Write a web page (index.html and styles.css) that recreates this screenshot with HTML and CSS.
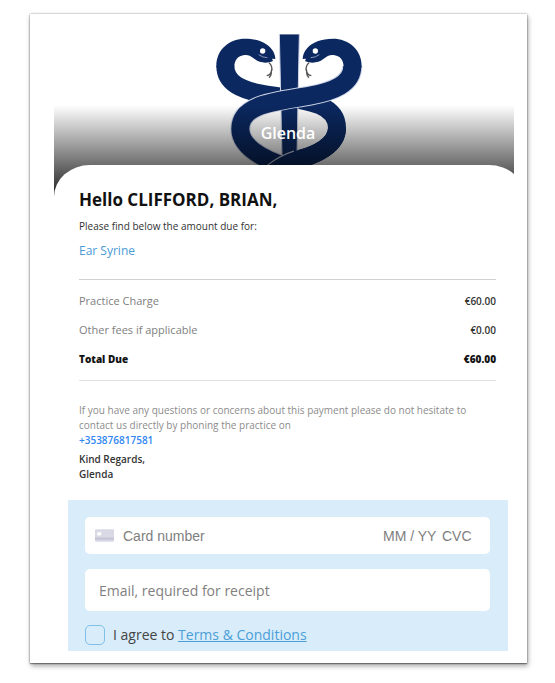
FILE: index.html
```html
<!DOCTYPE html>
<html lang="en">
<head>
<meta charset="utf-8">
<title>Payment request</title>
<link rel="stylesheet" href="styles.css">
</head>
<body>
<main class="card">
  <header class="hero">
    <svg class="logo" viewBox="45 40 444 396" aria-hidden="true">
      <g fill="none" stroke-linecap="butt">
        <path class="snake" d="M76 136C76 190 130 208 180 218C280 238 411 235 411 322C411 375 345 403 300 415"/>
        <path class="staff" d="M238 40H298L291 400L246 410Z"/>
        <path class="edge" d="M457 136C457 190 400 212 330 225C230 243 121 248 121 325C121 370 170 405 240 432"/>
        <path class="snake" d="M457 136C457 190 400 212 330 225C230 243 121 248 121 325C121 370 170 405 240 432"/>
        <path class="edge" d="M290 418C262 427 238 440 215 460"/>
        <path class="snake" d="M411 322C411 375 345 403 300 415C265 426 238 440 215 460"/>
      </g>
      <g id="head">
        <path class="skin" d="M49 140C47 85 90 54 135 54C170 54 198 65 212 82C221 92 226 104 226 115L216 114L219 121C200 130 178 126 165 116C153 106 145 102 134 103C113 105 103 119 103 140Z"/>
        <circle cx="188" cy="91" r="8" fill="#fff"/>
        <path d="M176 102Q188 111 202 111" fill="none" stroke="#8795b8" stroke-width="3"/>
        <path d="M207 126Q218 135 215 151M215 147Q213 164 200 165M214 151Q215 164 207 171" fill="none" stroke="#555" stroke-width="4"/>
      </g>
      <use href="#head" transform="matrix(-1 0 0 1 534 0)"/>
    </svg>
    <div class="shade"><span class="practice">Glenda</span></div>
  </header>
  <div class="clip">
    <div class="sheet">
      <section class="bill">
        <h1>Hello CLIFFORD, BRIAN,</h1>
        <p class="intro">Please find below the amount due for:</p>
        <p class="item">Ear Syrine</p>
        <table class="fees">
          <tbody>
            <tr><th scope="row">Practice Charge</th><td>€60.00</td></tr>
            <tr><th scope="row">Other fees if applicable</th><td>€0.00</td></tr>
            <tr class="total"><th scope="row">Total Due</th><td>€60.00</td></tr>
          </tbody>
        </table>
        <p class="note">If you have any questions or concerns about this payment please do not hesitate to contact us directly by phoning the practice on</p>
        <a class="phone" href="tel:+353876817581">+353876817581</a>
        <p class="sign">Kind Regards,<br>Glenda</p>
      </section>
      <form class="pay">
        <div class="field card-field">
          <svg class="card-icon" viewBox="0 0 18 12" aria-hidden="true">
            <rect width="18" height="12" rx="1" fill="#d9d9e6"/>
            <rect y="8" width="18" height="2" fill="#c4c4d6"/>
            <rect x="2" y="3" width="4" height="3" rx="1" fill="#fff"/>
          </svg>
          <input class="number" type="text" aria-label="Card number" placeholder="Card number">
          <input class="expiry" type="text" aria-label="Expiry date" placeholder="MM / YY">
          <input class="cvc" type="text" aria-label="CVC" placeholder="CVC">
        </div>
        <input class="field email" type="email" aria-label="Email" placeholder="Email, required for receipt">
        <div class="agree">
          <input type="checkbox" id="agree">
          <label for="agree">I agree to <a href="#terms">Terms &amp; Conditions</a></label>
        </div>
      </form>
    </div>
  </div>
</main>
</body>
</html>
```
FILE: styles.css
```css
* {
  box-sizing: border-box;
}

body {
  margin: 0;
  padding: 14px 28px 20px 30px;
  background: #fff;
  font-family: "Open Sans", sans-serif;
  font-size: 10px;
  color: #333;
}

h1,
p {
  margin: 0;
}

.card {
  padding: 0 13px 12px 24px;
  background: #fff;
  box-shadow: 0 0 2px rgba(0, 0, 0, 0.4), 0 1px 1px rgba(0, 0, 0, 0.3), 1px 3px 5px rgba(0, 0, 0, 0.35);
}

.hero {
  position: relative;
  height: 183px;
  padding-top: 20px;
}

.logo {
  display: block;
  width: 148px;
  height: 132px;
  margin: 0 auto;
  transform: translateX(5px);
}

.snake {
  stroke: #0b2860;
  stroke-width: 54;
}

.edge {
  stroke: #cdd4e6;
  stroke-width: 60;
}

.staff {
  fill: #0b2860;
  stroke: #cdd4e6;
  stroke-width: 3;
}

.skin {
  fill: #0b2860;
}

.shade {
  position: absolute;
  inset: 91px 0 0;
  padding-top: 17px;
  background: linear-gradient(rgba(0, 0, 0, 0), rgba(0, 0, 0, 0.88));
  text-align: center;
}

.practice {
  margin-left: 8px;
  color: #fff;
  font-size: 16px;
  font-weight: 600;
  line-height: 22px;
}

.clip {
  position: relative;
  margin-top: -32px;
  overflow: hidden;
}

.sheet {
  margin-right: -11px;
  padding: 21px 17px 0 14px;
  border-radius: 36px 36px 0 0 / 32px 32px 0 0;
  background: #fff;
}

.bill {
  padding: 0 12px 0 11px;
}

h1 {
  color: #111;
  font-size: 17px;
  line-height: 28px;
}

.intro {
  margin-top: 2px;
  line-height: 20px;
}

.item {
  margin: 3px 0 16px;
  color: #4a9bd6;
  font-size: 12px;
  line-height: 24px;
}

.fees {
  width: 100%;
  padding: 6px 0 7px;
  border-top: 1px solid #d0d0d0;
  border-bottom: 1px solid #e2e2e2;
  border-spacing: 0;
}

.fees th,
.fees td {
  height: 29px;
  padding: 0;
  font-weight: 400;
}

.fees th {
  color: #808080;
  font-size: 11px;
  text-align: left;
}

.fees td {
  font-weight: 600;
  text-align: right;
}

.fees .total th,
.fees .total td {
  color: #111;
  font-size: 10px;
  font-weight: 800;
}

.note {
  margin-top: 22px;
  color: #8c8c8c;
  line-height: 15px;
}

.phone {
  display: block;
  color: #2f86f0;
  font-weight: 600;
  line-height: 15px;
  text-decoration: none;
}

.sign {
  margin: 4px 0 18px;
  font-weight: 600;
  line-height: 15px;
}

.pay {
  padding: 17px 18px 6px 17px;
  background: #d8ecf9;
}

.field {
  width: 100%;
  border: 0;
  border-radius: 5px;
  background: #fff;
}

.card-field {
  display: flex;
  align-items: center;
  height: 37px;
  padding: 0 18px 0 10px;
}

.card-icon {
  flex: none;
  width: 19px;
  height: 13px;
  margin-right: 9px;
}

.card-field input {
  min-width: 0;
  padding: 0;
  border: 0;
  background: none;
  font-family: "Liberation Sans", sans-serif;
  font-size: 14px;
}

.number {
  flex: 1;
}

.expiry {
  width: 59px;
}

.cvc {
  width: 30px;
}

.email {
  display: block;
  height: 42px;
  margin: 15px 0 14px;
  padding: 0 14px;
  font-family: inherit;
  font-size: 14px;
}

input::placeholder {
  color: #808080;
}

.agree {
  display: flex;
  align-items: center;
  gap: 8px;
  color: #444;
  font-size: 14px;
  line-height: 20px;
}

.agree input {
  width: 20px;
  height: 20px;
  margin: 0;
  appearance: none;
  border: 1px solid #7fbfe8;
  border-radius: 5px;
}

.agree a {
  color: #4a9fd8;
}
```
